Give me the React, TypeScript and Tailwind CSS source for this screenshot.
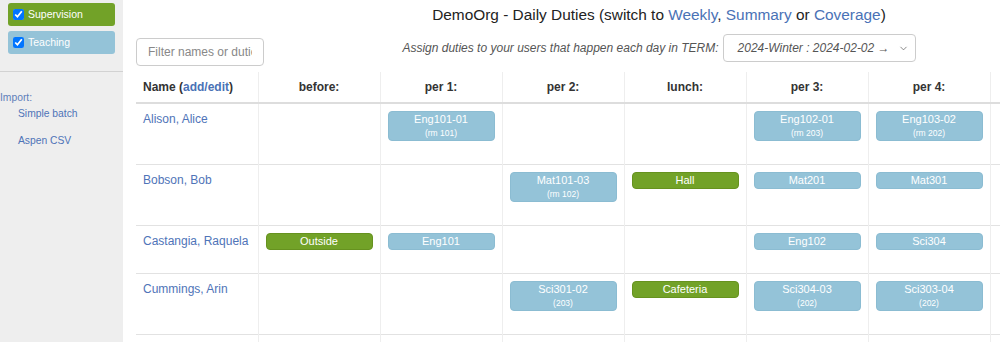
import { ChevronDown } from 'lucide-react';

type Duty = { label: string; sub?: string; kind: 'teach' | 'sup' };

const cols = ['before:', 'per 1:', 'per 2:', 'lunch:', 'per 3:', 'per 4:', ''];

const rows: { name: string; cells: (Duty | null)[] }[] = [
  {
    name: 'Alison, Alice',
    cells: [
      null,
      { label: 'Eng101-01', sub: '(rm 101)', kind: 'teach' },
      null,
      null,
      { label: 'Eng102-01', sub: '(rm 203)', kind: 'teach' },
      { label: 'Eng103-02', sub: '(rm 202)', kind: 'teach' },
      null,
    ],
  },
  {
    name: 'Bobson, Bob',
    cells: [
      null,
      null,
      { label: 'Mat101-03', sub: '(rm 102)', kind: 'teach' },
      { label: 'Hall', kind: 'sup' },
      { label: 'Mat201', kind: 'teach' },
      { label: 'Mat301', kind: 'teach' },
      null,
    ],
  },
  {
    name: 'Castangia, Raquela',
    cells: [
      { label: 'Outside', kind: 'sup' },
      { label: 'Eng101', kind: 'teach' },
      null,
      null,
      { label: 'Eng102', kind: 'teach' },
      { label: 'Sci304', kind: 'teach' },
      null,
    ],
  },
  {
    name: 'Cummings, Arin',
    cells: [
      null,
      null,
      { label: 'Sci301-02', sub: '(203)', kind: 'teach' },
      { label: 'Cafeteria', kind: 'sup' },
      { label: 'Sci304-03', sub: '(202)', kind: 'teach' },
      { label: 'Sci303-04', sub: '(202)', kind: 'teach' },
      null,
    ],
  },
  {
    name: '',
    cells: [null, null, null, null, null, null, null],
  },
];

function Chip({ duty }: { duty: Duty }) {
  const color =
    duty.kind === 'sup'
      ? 'bg-[#72a228] border-[#66921f]'
      : 'bg-[#94c3d8] border-[#8bbcd2]';
  return (
    <div className={`w-full rounded-[4px] border text-center text-white ${color}`}>
      <div className="text-[11px] leading-[15px]">{duty.label}</div>
      {duty.sub && <div className="text-[8.5px] leading-[13px]">{duty.sub}</div>}
    </div>
  );
}

export default function App() {
  return (
    <div
      className="flex w-[1000px] h-[342px] overflow-hidden bg-white text-[#333]"
      style={{ fontFamily: '"Liberation Sans", Arial, sans-serif' }}
    >
      {/* Sidebar */}
      <aside className="w-[123px] shrink-0 bg-[#eeeeee]">
        <div className="px-[8px] pt-[3px] flex flex-col gap-[5px]">
          <label className="flex items-center gap-[4px] h-[23px] px-[5px] rounded-[3px] bg-[#72a228] text-white text-[10.5px]">
            <input type="checkbox" checked readOnly className="w-[11px] h-[11px] m-0" />
            Supervision
          </label>
          <label className="flex items-center gap-[4px] h-[23px] px-[5px] rounded-[3px] bg-[#94c3d8] text-white text-[10.5px]">
            <input type="checkbox" checked readOnly className="w-[11px] h-[11px] m-0" />
            Teaching
          </label>
        </div>
        <div className="mt-[17px] border-t border-[#d2d2d2]" />
        <div className="mt-[19px] text-[10.3px] leading-[14px] text-[#5f7fba]">Import:</div>
        <div className="mt-[2px] pl-[18px] text-[10.3px] leading-[14px] text-[#4f74b8]">Simple batch</div>
        <div className="mt-[13px] pl-[18px] text-[10.3px] leading-[14px] text-[#4f74b8]">Aspen CSV</div>
      </aside>

      {/* Main */}
      <main className="w-[1072px] shrink-0 px-[13px]">
        <h1 className="h-[30px] leading-[30px] text-center text-[15.4px] text-[#222]">
          DemoOrg - Daily Duties (switch to <a className="text-[#4a72b6]">Weekly</a>,{' '}
          <a className="text-[#4a72b6]">Summary</a> or <a className="text-[#4a72b6]">Coverage</a>)
        </h1>

        <div className="mt-[4px] grid grid-cols-[1fr_auto_1fr] items-start">
          <div>
            <input
              placeholder="Filter names or duties"
              className="mt-[4px] w-[128px] h-[28px] rounded-[4px] border border-[#cccccc] px-[11px] text-[12px] text-[#333] placeholder:text-[#888] outline-none"
            />
          </div>
          <div className="flex items-center gap-[4px] text-[12px] italic text-[#555]">
            <span>Assign duties to your users that happen each day in TERM:</span>
            <div className="flex items-center justify-between w-[193px] h-[28px] rounded-[4px] border border-[#cccccc] pl-[14px] pr-[6px]">
              <span>2024-Winter : 2024-02-02 →</span>
              <ChevronDown className="w-[11px] h-[11px] text-[#555]" strokeWidth={1.5} />
            </div>
          </div>
          <div />
        </div>

        <table className="mt-[6px] table-fixed border-collapse w-[976px] text-[12px]">
          <colgroup>
            {Array.from({ length: 8 }).map((_, i) => (
              <col key={i} className="w-[122px]" />
            ))}
          </colgroup>
          <thead>
            <tr className="border-b-2 border-[#dddddd]">
              <th className="h-[31px] px-[7px] text-left font-bold text-[#333]">
                Name (<a className="text-[#4a72b6]">add/edit</a>)
              </th>
              {cols.map((c, i) => (
                <th key={i} className="h-[31px] px-[7px] text-center font-bold text-[#333] border-l border-[#eeeeee]">
                  {c}
                </th>
              ))}
            </tr>
          </thead>
          <tbody>
            {rows.map((r, ri) => (
              <tr key={ri} className="border-b border-[#e2e2e2]">
                <td className="align-top px-[7px] pt-[7px] pb-[23px] leading-[16px] text-[#4f74b8]">{r.name}</td>
                {r.cells.map((d, i) => (
                  <td key={i} className="align-top px-[7px] pt-[7px] pb-[23px] border-l border-[#eeeeee]">
                    {d && <Chip duty={d} />}
                  </td>
                ))}
              </tr>
            ))}
          </tbody>
        </table>
      </main>
    </div>
  );
}
